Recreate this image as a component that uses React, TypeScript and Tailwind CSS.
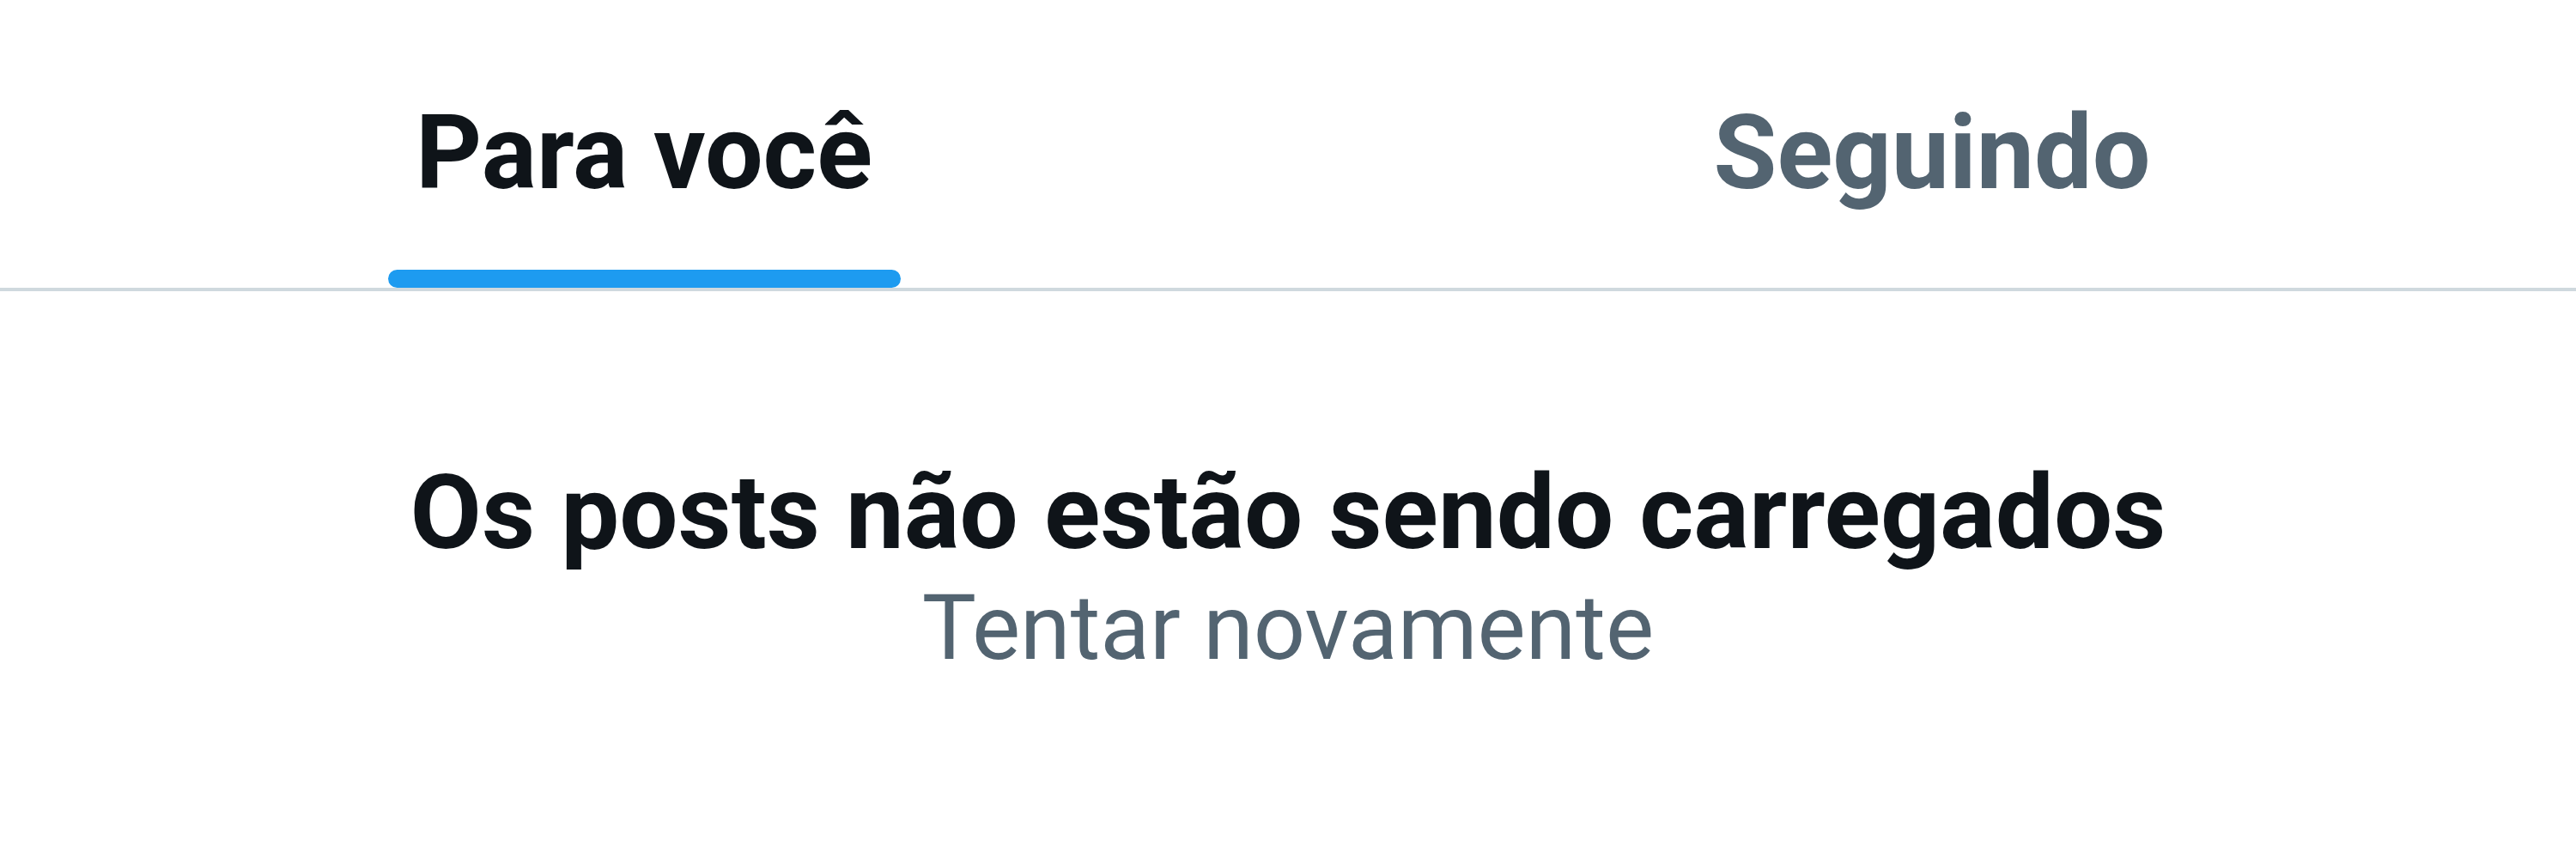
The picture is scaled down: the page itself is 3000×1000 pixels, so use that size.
export default function App() {
  return (
    <div className="min-h-[1000px] w-[3000px] bg-white font-['Roboto',Arial,sans-serif] antialiased">
      {/* Tabs */}
      <div className="flex h-[339px] border-b-[4px] border-[#cfd9de]">
        <div className="flex flex-1 flex-col items-center">
          <span className="pt-[118px] text-[120px] font-bold leading-none text-[#0f1419]">Para você</span>
          <div className="mt-auto h-[21px] w-[597px] rounded-full bg-[#1d9bf0]" />
        </div>
        <div className="flex flex-1 flex-col items-center">
          <span className="pt-[118px] text-[120px] font-bold leading-none text-[#536471]">Seguindo</span>
        </div>
      </div>

      {/* Error state */}
      <div className="flex flex-col items-center pt-[198px]">
        <h2 className="text-[121px] font-bold leading-none text-[#0f1419]">Os posts não estão sendo carregados</h2>
        <button className="mt-[20px] text-[106px] leading-none text-[#536471]">Tentar novamente</button>
      </div>
    </div>
  );
}
